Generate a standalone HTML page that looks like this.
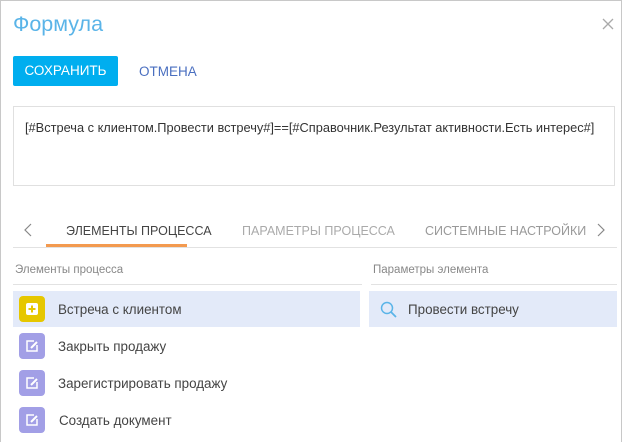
<!DOCTYPE html>
<html><head><meta charset="utf-8"><style>
*{margin:0;padding:0;box-sizing:border-box}
body{width:622px;height:442px;background:#fff;font-family:"Liberation Sans",sans-serif;position:relative;overflow:hidden;color:#444}
.frame{position:absolute;left:0;top:0;width:622px;height:442px;border:1px solid #c8c8c8;border-bottom:none}
.a{position:absolute;white-space:nowrap}
.ic{position:absolute;left:19px;width:26px;height:26px;border-radius:4px;background:#a29fe6}
.row{font-size:13.4px;color:#444}
</style></head><body>
<div class="frame"></div>
<div class="a" style="left:13px;top:12px;font-size:21.5px;color:#5ab4e8">Формула</div>
<svg class="a" style="left:602px;top:18px" width="12" height="12"><path d="M1 1L11 11M11 1L1 11" stroke="#aaa" stroke-width="1.3"/></svg>
<div class="a" style="left:13px;top:56px;width:105px;height:30px;background:#00aeef;border-radius:2px;color:#fff;font-size:13.5px;line-height:30px;text-align:center">СОХРАНИТЬ</div>
<div class="a" style="left:139px;top:64px;font-size:13.5px;color:#4a6fc0">ОТМЕНА</div>
<div class="a" style="left:13px;top:106px;width:602px;height:80px;border:1px solid #e0e0e0"></div>
<div class="a" style="left:25px;top:120px;font-size:12.8px;color:#333">[#Встреча с клиентом.Провести встречу#]==[#Справочник.Результат активности.Есть интерес#]</div>
<svg class="a" style="left:24px;top:223px" width="8" height="14"><path d="M7 1L1 7L7 13" stroke="#888" fill="none" stroke-width="1.2"/></svg>
<svg class="a" style="left:597px;top:223px" width="8" height="14"><path d="M1 1L7 7L1 13" stroke="#888" fill="none" stroke-width="1.2"/></svg>
<div class="a" style="left:66px;top:224px;font-size:12.5px;color:#444">ЭЛЕМЕНТЫ ПРОЦЕССА</div>
<div class="a" style="left:242px;top:224px;font-size:12.5px;color:#aaa">ПАРАМЕТРЫ ПРОЦЕССА</div>
<div class="a" style="left:425px;top:224px;font-size:12.5px;color:#999">СИСТЕМНЫЕ НАСТРОЙКИ</div>
<div class="a" style="left:46px;top:244px;width:141px;height:3px;background:#f39a4f"></div>
<div class="a" style="left:13px;top:247px;width:604px;height:1px;background:#e2e2e2"></div>
<div class="a" style="left:15px;top:264px;font-size:11.5px;color:#888">Элементы процесса</div>
<div class="a" style="left:373px;top:264px;font-size:11.5px;color:#888">Параметры элемента</div>
<div class="a" style="left:13px;top:284px;width:349px;height:1px;background:#e2e2e2"></div>
<div class="a" style="left:371px;top:284px;width:246px;height:1px;background:#e2e2e2"></div>
<div class="a" style="left:13px;top:291px;width:347px;height:36px;background:#e3eaf9"></div>
<div class="a" style="left:369px;top:291px;width:248px;height:36px;background:#e3eaf9"></div>
<div class="ic" style="top:296px;background:#e6c700"><svg width="26" height="26"><rect x="7" y="7" width="12" height="12" rx="2" fill="#fff"/><path d="M13 9.5V16.5M9.5 13H16.5" stroke="#e6c700" stroke-width="2"/></svg></div>
<div class="a row" style="left:58px;top:302px">Встреча с клиентом</div>
<svg class="a" style="left:380px;top:301px" width="18" height="18"><circle cx="7" cy="7" r="5.5" stroke="#5ab4e8" stroke-width="1.5" fill="none"/><path d="M11 11L16 16" stroke="#5ab4e8" stroke-width="1.8"/></svg>
<div class="a row" style="left:408px;top:302px">Провести встречу</div>
<div class="ic" style="top:333px"><svg width="26" height="26"><path d="M15 8H8V18H18V12" stroke="#fff" stroke-width="1.5" fill="none"/><path d="M12 15L18 9" stroke="#fff" stroke-width="2"/></svg></div>
<div class="a row" style="left:58px;top:339px">Закрыть продажу</div>
<div class="ic" style="top:370px"><svg width="26" height="26"><path d="M15 8H8V18H18V12" stroke="#fff" stroke-width="1.5" fill="none"/><path d="M12 15L18 9" stroke="#fff" stroke-width="2"/></svg></div>
<div class="a row" style="left:58px;top:376px">Зарегистрировать продажу</div>
<div class="ic" style="top:407px"><svg width="26" height="26"><path d="M15 8H8V18H18V12" stroke="#fff" stroke-width="1.5" fill="none"/><path d="M12 15L18 9" stroke="#fff" stroke-width="2"/></svg></div>
<div class="a row" style="left:59px;top:413px">Создать документ</div>
</body></html>
